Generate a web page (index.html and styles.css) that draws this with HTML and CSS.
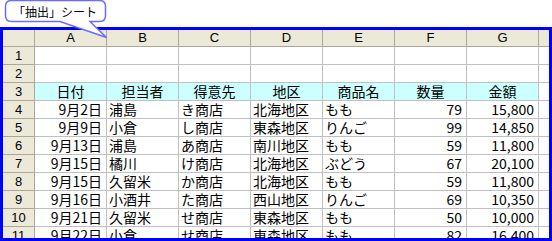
FILE: index.html
```html
<!DOCTYPE html>
<html>
  <head>
    <meta charset="UTF-8" />
    <title>抽出シート</title>
    <link rel="stylesheet" href="styles.css">
  </head>
  <body>
    <div class="callout">
      <svg class="callout-shape" width="112" height="40" viewBox="0 0 112 40">
        <path d="M11.5 0.5 H99.5 Q105.5 0.5 105.5 6.5 V15.5 Q105.5 21.5 99.5 21.5 H90 L106.5 37.5 L60 21.5 H11.5 Q5.5 21.5 5.5 15.5 V6.5 Q5.5 0.5 11.5 0.5 Z" fill="#fff" stroke="#6b6bff" stroke-width="1.5" />
      </svg>
      <span class="callout-text">「抽出」シート</span>
    </div>

    <div class="sheet">
      <div class="row head-row">
        <div class="cell corner"></div>
        <div class="cell col-head">A</div>
        <div class="cell col-head">B</div>
        <div class="cell col-head">C</div>
        <div class="cell col-head">D</div>
        <div class="cell col-head">E</div>
        <div class="cell col-head">F</div>
        <div class="cell col-head">G</div>
        <div class="cell col-head rest"></div>
      </div>
      <div id="rows"></div>
    </div>

    <script>
      const data = [
        ["", "", "", "", "", "", ""],
        ["", "", "", "", "", "", ""],
        ["日付", "担当者", "得意先", "地区", "商品名", "数量", "金額"],
        ["9月2日", "浦島", "き商店", "北海地区", "もも", "79", "15,800"],
        ["9月9日", "小倉", "し商店", "東森地区", "りんご", "99", "14,850"],
        ["9月13日", "浦島", "あ商店", "南川地区", "もも", "59", "11,800"],
        ["9月15日", "橘川", "け商店", "北海地区", "ぶどう", "67", "20,100"],
        ["9月15日", "久留米", "か商店", "北海地区", "もも", "59", "11,800"],
        ["9月16日", "小酒井", "た商店", "西山地区", "りんご", "69", "10,350"],
        ["9月21日", "久留米", "せ商店", "東森地区", "もも", "50", "10,000"],
        ["9月22日", "小倉", "せ商店", "東森地区", "もも", "82", "16,400"],
      ];
      // 列ごとの配置 (A:右, B-E:左, F-G:右)
      const align = ["right", "left", "left", "left", "left", "right", "right"];

      const rows = document.getElementById("rows");
      data.forEach((values, i) => {
        const row = document.createElement("div");
        row.className = "row";
        const isTitle = i === 2;

        const num = document.createElement("div");
        num.className = "cell row-head";
        num.textContent = i + 1;
        row.appendChild(num);

        values.forEach((v, c) => {
          const cell = document.createElement("div");
          cell.className = "cell " + (isTitle ? "title center" : align[c]);
          cell.textContent = v;
          row.appendChild(cell);
        });

        const rest = document.createElement("div");
        rest.className = "cell rest";
        row.appendChild(rest);
        rows.appendChild(row);
      });
    </script>
  </body>
</html>
```

FILE: styles.css
```css
* {
  margin: 0;
  padding: 0;
  box-sizing: border-box;
}

body {
  width: 552px;
  height: 241px;
  background-color: #fff;
  font-family: "Noto Sans CJK JP", "Liberation Sans", sans-serif;
  color: #000;
  overflow: hidden;
  position: relative;
}

.callout {
  position: absolute;
  top: 0;
  left: 0;
  width: 112px;
  height: 40px;
  z-index: 5;
}

.callout-shape {
  position: absolute;
  top: 0;
  left: 0;
}

.callout-text {
  position: absolute;
  top: 4px;
  left: 13px;
  font-size: 12px;
  line-height: 16px;
  white-space: nowrap;
}

.sheet {
  margin-top: 27px;
  height: 214px;
  border: 3px solid #0000ff;
  overflow: hidden;
}

.row {
  display: grid;
  grid-template-columns: 32px repeat(7, 72px) 1fr;
  height: 18px;
}

.head-row {
  height: 17px;
}

.cell {
  border-right: 1px solid #c0c0c0;
  border-bottom: 1px solid #c0c0c0;
  font-size: 14px;
  line-height: 17px;
  white-space: nowrap;
  padding: 0 3px;
}

.head-row .cell {
  line-height: 16px;
}

.corner,
.col-head,
.row-head {
  background-color: #ece9d8;
  border-color: #aca899;
  text-align: center;
  font-family: "Liberation Sans", sans-serif;
  font-size: 13px;
}

.rest {
  border-right: none;
}

.title {
  background-color: #ccffff;
}

.left {
  text-align: left;
  padding-left: 2px;
}

.right {
  text-align: right;
  padding-right: 4px;
}

.center {
  text-align: center;
}
```
